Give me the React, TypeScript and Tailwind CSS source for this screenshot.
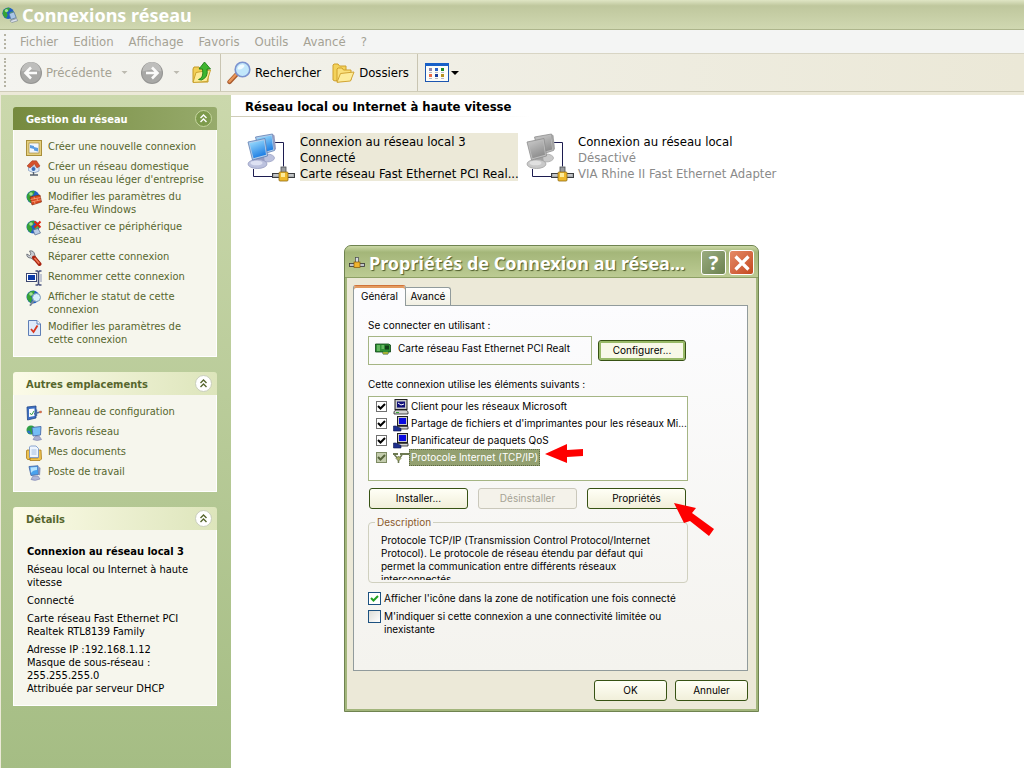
import type { ReactNode } from 'react';

interface TaskItem {
    label: string;
    icon: ReactNode;
}

interface PanelProps {
    title: string;
    primary?: boolean;
    children: ReactNode;
}

/* ---------- icons ---------- */

function GlobeShape() {
    return (
        <>
            <circle cx="7" cy="7" r="6.500" fill="#1f5fc4" />
            <path d="M1.500 4 Q5 0 9 1 L7.500 4.500 L5 6 L6.500 9 L4.500 13 Q0 9 1 6 Z" fill="#35a335" />
            <path d="M9.500 5.500 L12.500 5 Q13.500 8 11 11 L9 8.500 Z" fill="#56b948" />
            <circle cx="5" cy="4" r="1.800" fill="#c8f5b0" opacity="0.75" />
        </>
    );
}

function GlobeNetIcon({ className }: { className: string }) {
    return (
        <svg viewBox="0 0 18 18" className={className} aria-hidden="true">
            <GlobeShape />
            <path d="M8 7.500 L13.500 5.500 L16 12 L10 14 Z" fill="#a9c6e6" stroke="#4d6c98" strokeWidth="0.8" />
            <path d="M9 15.500 L16.500 13 L17.500 15.500 L11 17.500 Z" fill="#dfe5ee" stroke="#66738b" strokeWidth="0.6" />
        </svg>
    );
}

function ArrowCircle({ flip }: { flip?: boolean }) {
    return (
        <svg viewBox="0 0 24 24" className="h-6 w-6" aria-hidden="true">
            <circle cx="12" cy="12" r="11" fill="#959593" />
            <circle cx="12" cy="12" r="10" fill="#a8a8a6" />
            <path d="M2.500 10.500 A9.500 9.500 0 0 1 21.500 10.500 Q12 7 2.500 10.500 Z" fill="#bebebc" />
            <path
                d={flip ? 'M6 12 H17 M12 6.500 L17.500 12 L12 17.500' : 'M18 12 H7 M12 6.500 L6.500 12 L12 17.500'}
                fill="none"
                stroke="#fbfbfa"
                strokeWidth="2.600"
            />
        </svg>
    );
}

function Caret({ className }: { className: string }) {
    return (
        <svg viewBox="0 0 8 4" className={className} aria-hidden="true">
            <path d="M0 0 H8 L4 4 Z" fill="currentColor" />
        </svg>
    );
}

function FolderUpIcon() {
    return (
        <svg viewBox="0 0 20 23" className="h-[23px] w-5" aria-hidden="true">
            <path d="M1 8 L2 6 H7 L8.500 8 H16 V21 H1 Z" fill="#f2cf56" stroke="#c39a26" />
            <path d="M1 21.500 L4 11.500 L18.500 9 L15 20.500 Z" fill="#fdeb96" stroke="#cba32f" />
            <path d="M6.500 18.500 Q12 17 10.500 8 H7 L12.500 1 L18.500 8 H15 Q16.500 16.500 9.500 19 Z" fill="#3fb52f" stroke="#1d7f1a" strokeWidth="0.9" />
        </svg>
    );
}

function SearchIcon() {
    return (
        <svg viewBox="0 0 24 24" className="h-6 w-6" aria-hidden="true">
            <path d="M9.500 13.500 L2.500 21" stroke="#a85a2c" strokeWidth="4.400" strokeLinecap="round" />
            <path d="M9 13.500 L2.500 20.500" stroke="#e8965a" strokeWidth="2.400" strokeLinecap="round" />
            <circle cx="15.500" cy="8.500" r="7.300" fill="#c2e7fb" stroke="#7c93cf" strokeWidth="1.600" />
            <path d="M10.500 8 A5 5 0 0 1 16 3.500 Q19 4.500 16 7 T10.500 8 Z" fill="#f1fbff" />
        </svg>
    );
}

function FoldersIcon() {
    return (
        <svg viewBox="0 0 23 20" className="h-5 w-[23px]" aria-hidden="true">
            <path d="M1 17 V2 L2 1 H6 L7.500 3 H14 V15 L3 18 Z" fill="#f3d25c" stroke="#cfa02b" />
            <path d="M5 19 V6 L6 5 H10 L11.500 7 H19 V17 Z" fill="#fae07b" stroke="#cfa02b" />
            <path d="M5 19.300 L8.500 10.500 L22 9 L18.500 18 Z" fill="#fdec9b" stroke="#d2a535" />
        </svg>
    );
}

function ViewsIcon() {
    return (
        <svg viewBox="0 0 24 19" className="h-[19px] w-6" aria-hidden="true">
            <rect x="0.5" y="0.5" width="23" height="18" fill="#fdfdf8" stroke="#1c56b0" />
            <rect x="0" y="0" width="24" height="3" fill="#1860c8" />
            <path d="M4 5h3v3H4z" fill="#8f86ad" />
            <path d="M10 5h3v3h-3z" fill="#2d63c6" />
            <path d="M16 5h3v3h-3z" fill="#1e8a2a" />
            <path d="M4 11h3v3H4z" fill="#ec6a45" />
            <path d="M10 11h3v3h-3z" fill="#1c3f9c" />
            <path d="M16 11h3v3h-3z" fill="#b79320" />
            <path d="M4 9.500h3M10 9.500h3M16 9.500h3M4 15.500h3M10 15.500h3M16 15.500h3" stroke="#b9b9c4" />
        </svg>
    );
}

function ConnectionIcon({ disabled }: { disabled?: boolean }) {
    const id = disabled ? 'screen-off' : 'screen-on';
    const shine = disabled ? '#c9c9c9' : '#a6e4ff';
    const screen = disabled ? '#8f8f8f' : '#2080e4';
    const frame = disabled ? '#8e8e8e' : '#5e7fb4';
    const bezel = disabled ? '#bdbdbd' : '#b4cdea';
    const base = disabled ? '#c9c9c9' : '#bcc2de';
    const rim = disabled ? '#a2a2a2' : '#959cc0';
    return (
        <svg viewBox="0 0 48 50" className="h-[50px] w-12 shrink-0" aria-hidden="true">
            <defs>
                <linearGradient id={id} x1="0" y1="0" x2="0.4" y2="1">
                    <stop offset="0" stopColor={shine} />
                    <stop offset="1" stopColor={screen} />
                </linearGradient>
            </defs>
            <path d="M27 9.500h9.500v24M6.500 36v7.500H25" fill="none" stroke="#1c1c50" />
            <ellipse cx="20" cy="25" rx="7.500" ry="4" fill={base} stroke={rim} strokeWidth="0.7" />
            <path d="M8.500 4 L25.500 1 L27.500 17.500 L13 22 Z" fill={bezel} stroke={frame} strokeWidth="0.8" />
            <path d="M10 5.200 L24.500 2.500 L26.200 16.500 L14 20 Z" fill={`url(#${id})`} />
            <path d="M25.500 1 L27.500 2.500 L29 16 L27.500 17.500 Z" fill={rim} />
            <path d="M8.500 25 L17 23 L18 31 L9 32 Z" fill={rim} />
            <ellipse cx="10.500" cy="31" rx="9.500" ry="4.500" fill={base} stroke={rim} strokeWidth="0.8" />
            <ellipse cx="9.500" cy="30" rx="6" ry="2.300" fill={disabled ? '#e0e0e0' : '#dde1f2'} />
            <path d="M1 9 L18 5.500 L20.500 23 L5.500 27 Z" fill={bezel} stroke={frame} strokeWidth="0.8" />
            <path d="M2.500 10.200 L17 7.200 L19 21.800 L6.500 25.200 Z" fill={`url(#${id})`} />
            <rect x="34" y="34" width="5" height="8" fill="#9a9da0" stroke="#4d4f52" strokeWidth="0.8" />
            <rect x="25.500" y="40.500" width="22" height="4" fill="#a9acae" stroke="#3d3f42" />
            <path d="M27 42h19" stroke="#dcdfe1" />
            <rect x="32" y="39" width="9" height="9" rx="1" fill="#eeb92c" stroke="#8f6a12" strokeWidth="0.8" />
            <rect x="34" y="40" width="4" height="4" fill="#fdec9c" />
        </svg>
    );
}

function Frame16({ children }: { children: ReactNode }) {
    return <svg viewBox="0 0 16 16" className="h-4 w-4 shrink-0" aria-hidden="true">{children}</svg>;
}

const wizardIcon = (
    <Frame16>
        <rect x="0.5" y="0.5" width="15" height="15" fill="#e5cf7e" stroke="#a98f3a" />
        <rect x="3" y="3" width="10" height="10" fill="#f2f6fb" stroke="#8f7c36" strokeWidth="0.6" />
        <path d="M4 5 L8 6 L8 9 L4 8 Z M8 7 L12 8 L12 11.500 L8 10.500 Z" fill="#5a9be0" />
    </Frame16>
);

const homeNetIcon = (
    <Frame16>
        <path d="M2.500 6 H13 V11 L8 13 L2.500 10.500 Z" fill="#dce9f8" stroke="#7c95bd" strokeWidth="0.7" />
        <path d="M1 6 L6 0.800 H10.500 L14 6 L11 8 L8.500 4 L4 8 Z" fill="#d5512c" stroke="#96341a" strokeWidth="0.5" />
        <circle cx="7.500" cy="9" r="2" fill="#3c6cb4" />
        <path d="M7.500 12 V15 M4 15 H12" stroke="#55606e" strokeWidth="1.300" />
    </Frame16>
);

const firewallIcon = (
    <Frame16>
        <GlobeShape />
        <path d="M4 7 L14 5 L15.500 12 L6 15 Z" fill="#d9481e" stroke="#7d2209" strokeWidth="0.6" />
        <path d="M4.500 9.500 L14.500 7.500 M5.200 12 L15 9.800 M8 6.500 L8.500 9 M11 8.300 L11.500 10.500 M8.500 11.500 L9 14" stroke="#fbb08a" strokeWidth="0.7" />
    </Frame16>
);

const disableIcon = (
    <Frame16>
        <GlobeShape />
        <path d="M7 10 L12 8.500 L14.500 13 L9 15 Z" fill="#b9cce6" stroke="#54688c" strokeWidth="0.7" />
        <path d="M8.500 1.500 L14.500 7.500 M14.500 1.500 L8.500 7.500" stroke="#dc2a12" strokeWidth="2" />
    </Frame16>
);

const wrenchIcon = (
    <Frame16>
        <path d="M0.800 4 L3.500 5.500 L5 4 L3.500 1 Q8 0 8.800 5 L10 8 L7.500 10 L5 8 Q0.500 8 0.800 4 Z" fill="#c9ccd2" stroke="#5e636d" strokeWidth="0.8" />
        <path d="M8 7.500 L13.500 14" stroke="#a82411" strokeWidth="4" strokeLinecap="round" />
        <path d="M8.500 8 L13.300 13.500" stroke="#f07a55" strokeWidth="1.600" />
    </Frame16>
);

const renameIcon = (
    <Frame16>
        <rect x="0.5" y="3.500" width="10" height="8" fill="#fff" stroke="#3c4770" />
        <rect x="2" y="5" width="7" height="5" fill="#0a3aa8" />
        <path d="M9.500 1 H11.500 L12.500 2 L13.500 1 H15.500 M12.500 2 V14 M9.500 15 H11.500 L12.500 14 L13.500 15 H15.500" fill="none" stroke="#46507c" strokeWidth="1.600" />
        <path d="M15 4 V12" stroke="#8d95b5" />
    </Frame16>
);

const statusIcon = (
    <Frame16>
        <GlobeShape />
        <path d="M7.500 11 L4.500 15" stroke="#7a8698" strokeWidth="2" strokeLinecap="round" />
        <circle cx="10.500" cy="7.500" r="4" fill="#d6effc" stroke="#7f9bb8" />
    </Frame16>
);

const settingsIcon = (
    <Frame16>
        <path d="M2.500 0.500 H11 L14.500 4 V15.500 H2.500 Z" fill="#dfeafa" stroke="#5e7eb6" />
        <path d="M11 0.500 V4 H14.500" fill="#fff" stroke="#5e7eb6" />
        <path d="M5 9 L7.500 12 L11.500 5.500" fill="none" stroke="#d8371f" strokeWidth="1.800" />
    </Frame16>
);

const controlPanelIcon = (
    <Frame16>
        <path d="M1 2 L10 1 V13 L1.500 15 Z" fill="#3b6fc4" stroke="#234788" strokeWidth="0.8" />
        <path d="M3 4 L8.500 3.500 V11 L3 12 Z" fill="#fafcff" />
        <path d="M4 8 L5.500 10 L8 6" fill="none" stroke="#3aa048" />
        <path d="M8 9 L15.500 6.500 M10.500 4.500 V11" stroke="#4a6ea5" strokeWidth="1.400" />
        <circle cx="14.500" cy="7" r="1.300" fill="#d8714c" />
    </Frame16>
);

const netPlacesIcon = (
    <Frame16>
        <circle cx="5" cy="5" r="4.500" fill="#2f9f45" />
        <path d="M1 6 Q4 4 5 9 Q2 9 1 6 Z" fill="#2a6fd0" />
        <path d="M6 2.500 L15 1.500 L14.500 10 L7 11 Z" fill="#74bdf5" stroke="#4a6ba8" strokeWidth="0.9" />
        <path d="M9 11.500 H13.500 L15.500 14.500 Q11 16.500 7 14.500 Z" fill="#a9b0d4" stroke="#7880ac" strokeWidth="0.6" />
    </Frame16>
);

const documentsIcon = (
    <Frame16>
        <path d="M1 5 H4 V14.500 H1.500 L0.500 13 V6 Z M12 5 H15 L15.500 14 L14 15.500 H4 V13 H12 Z" fill="#eec24f" stroke="#a87c1c" strokeWidth="0.8" />
        <path d="M4.500 1 H10 L12.500 3.500 V12.500 H3.500 V2 Z" fill="#eef5fe" stroke="#6e8fc4" strokeWidth="0.8" />
        <path d="M5.500 5 H10.500 M5.500 7 H10.500 M5.500 9 H10.500" stroke="#8fb0dc" strokeWidth="0.8" />
    </Frame16>
);

const computerIcon = (
    <Frame16>
        <path d="M3 1.500 L12 0.800 L12.500 9.500 L5 10.500 Z" fill="#4aa2ee" stroke="#4a6ba8" strokeWidth="0.9" />
        <path d="M4.500 2.500 L11 2 L11 5 Q7 5 5 8 Z" fill="#b5e4ff" />
        <path d="M12.500 1.500 L14.500 3 L14 10.500 L12.500 9.500 Z" fill="#8b95bd" />
        <path d="M7 11 H12 L14 14 Q9 16.500 5 14.500 Z" fill="#b0b6d8" stroke="#7880ac" strokeWidth="0.6" />
    </Frame16>
);

const clientIcon = (
    <Frame16>
        <rect x="2" y="0.5" width="12" height="10" fill="#c8c8c8" stroke="#222" />
        <rect x="4" y="2.500" width="8" height="6" fill="#10107a" />
        <path d="M5 4 L8 6 L11 5" stroke="#fff" fill="none" />
        <path d="M1 12.500 L3 11 H13 L15 12.500 V15 H1 Z" fill="#d4d4d4" stroke="#222" strokeWidth="0.8" />
        <path d="M3 13.500 H6" stroke="#3a3" />
    </Frame16>
);

const serviceIcon = (
    <Frame16>
        <rect x="4.500" y="0.500" width="10" height="9" fill="#c8c8c8" stroke="#222" />
        <rect x="6" y="2" width="7" height="6" fill="#0a0ae0" />
        <path d="M4 10.500 H15 V13 H4 Z" fill="#d4d4d4" stroke="#222" strokeWidth="0.8" />
        <path d="M0.500 10 H3 L8 12.500 V15 H0.500 Z" fill="#1e2f8c" stroke="#0c1550" strokeWidth="0.6" />
    </Frame16>
);

const protocolIcon = (
    <Frame16>
        <path d="M0 4 H5 M7 4 H16" stroke="#6d7a52" strokeWidth="2" />
        <path d="M1.500 5 L5 8.500 M9 5 L6.500 8 M5.500 10 V13" fill="none" stroke="#6d7a52" strokeWidth="1.600" />
        <path d="M5.500 6 L8 8.500 L5.500 11 L3 8.500 Z" fill="#a6ae62" stroke="#5b6741" strokeWidth="0.6" />
    </Frame16>
);

const cardIcon = (
    <Frame16>
        <path d="M0.500 3 H13.500 L15.500 4 V11 H13 V13 H8 V11 H0.500 Z" fill="#2f8f35" stroke="#0d4414" strokeWidth="0.8" />
        <path d="M2 5 H5 M2 7 H5 M2 9 H5 M6.500 5 H9 M6.500 7 H9" stroke="#9be08d" />
        <rect x="10" y="4.500" width="4" height="4" fill="#123f18" />
        <path d="M8 12 H13" stroke="#d9c43a" strokeWidth="1.400" />
    </Frame16>
);

const lanIcon = (
    <Frame16>
        <rect x="6.500" y="3.500" width="3" height="6" fill="#d7dade" stroke="#44484c" strokeWidth="0.7" />
        <rect x="0.500" y="9.500" width="15" height="3" fill="#c0c4c8" stroke="#333" strokeWidth="0.8" />
        <rect x="5" y="8" width="6" height="5.500" fill="#f0b42e" stroke="#80560c" strokeWidth="0.7" />
    </Frame16>
);

/* ---------- data ---------- */

const menus = ['Fichier', 'Edition', 'Affichage', 'Favoris', 'Outils', 'Avancé', '?'];

const networkTasks: TaskItem[] = [
    { label: 'Créer une nouvelle connexion', icon: wizardIcon },
    { label: "Créer un réseau domestique\nou un réseau léger d'entreprise", icon: homeNetIcon },
    { label: 'Modifier les paramètres du\nPare-feu Windows', icon: firewallIcon },
    { label: 'Désactiver ce périphérique\nréseau', icon: disableIcon },
    { label: 'Réparer cette connexion', icon: wrenchIcon },
    { label: 'Renommer cette connexion', icon: renameIcon },
    { label: 'Afficher le statut de cette\nconnexion', icon: statusIcon },
    { label: 'Modifier les paramètres de\ncette connexion', icon: settingsIcon },
];

const otherPlaces: TaskItem[] = [
    { label: 'Panneau de configuration', icon: controlPanelIcon },
    { label: 'Favoris réseau', icon: netPlacesIcon },
    { label: 'Mes documents', icon: documentsIcon },
    { label: 'Poste de travail', icon: computerIcon },
];

const components = [
    { label: 'Client pour les réseaux Microsoft', icon: clientIcon },
    { label: "Partage de fichiers et d'imprimantes pour les réseaux Mi...", icon: serviceIcon },
    { label: 'Planificateur de paquets QoS', icon: serviceIcon },
    { label: 'Protocole Internet (TCP/IP)', icon: protocolIcon, selected: true },
];

/* ---------- explorer window ---------- */

function Grip() {
    return <span className="my-1 ml-1 w-0 self-stretch border-l-2 border-dotted border-[#b5b3a4]" />;
}

function Divider() {
    return <span className="w-px self-stretch bg-[#c9c5b2]" />;
}

function Toolbar() {
    return (
        <div className="flex h-[38px] items-center border-b border-[#cfccb8] bg-gradient-to-r from-[#f4f4f0] to-[#ebe8d7] text-[13px]">
            <Grip />
            <button disabled className="ml-[13px] flex items-center gap-[3px] text-[#a5a294]">
                <ArrowCircle />
                Précédente
                <Caret className="ml-1.5 h-[3px] w-[7px] text-[#bcbab0]" />
            </button>
            <button disabled aria-label="Suivante" className="ml-3 flex items-center gap-[9px]">
                <ArrowCircle flip />
                <Caret className="h-[3px] w-[7px] text-[#bcbab0]" />
            </button>
            <button aria-label="Dossier parent" className="ml-3"><FolderUpIcon /></button>
            <span className="w-2" />
            <Divider />
            <button className="ml-1.5 flex items-center gap-1"><SearchIcon />Rechercher</button>
            <button className="ml-[11px] flex items-center gap-1"><FoldersIcon />Dossiers</button>
            <span className="w-2" />
            <Divider />
            <button aria-label="Affichages" className="ml-[7px] flex items-center gap-0.5">
                <ViewsIcon />
                <Caret className="h-1 w-2 text-black" />
            </button>
        </div>
    );
}

function Panel({ title, primary, children }: PanelProps) {
    return (
        <section>
            <header
                className={`flex h-[23px] items-center justify-between rounded-t-[3px] pl-[13px] pr-[5px] text-[11px] font-bold ${primary
                    ? 'bg-gradient-to-r from-[#768a3e] to-[#97ab6c] text-white'
                    : 'bg-gradient-to-r from-[#fcfbe8] to-[#dde5bb] text-[#56662d]'
                    }`}
            >
                <h2 className="pt-1">{title}</h2>
                <button
                    aria-label={`Réduire ${title}`}
                    className={`flex h-[17px] w-[17px] items-center justify-center rounded-full border ${primary
                        ? 'border-[#c7d6a0] bg-[#7d9a4c] text-white'
                        : 'border-[#c9cebb] bg-white text-[#56662d]'
                        }`}
                >
                    <svg viewBox="0 0 9 9" className="h-[9px] w-[9px]" aria-hidden="true">
                        <path d="M1.500 4 L4.500 1 L7.500 4 M1.500 8 L4.500 5 L7.500 8" fill="none" stroke="currentColor" strokeWidth="1.400" />
                    </svg>
                </button>
            </header>
            <div className="border border-t-0 border-white bg-[#f6f6ed] px-3 py-2.5 text-[11px] leading-[13px]">{children}</div>
        </section>
    );
}

function TaskList({ items }: { items: TaskItem[] }) {
    return (
        <ul className="flex flex-col gap-1 text-[#56662d]">
            {items.map(item => (
                <li key={item.label}>
                    <a href="#" className="flex min-h-4 gap-1.5 whitespace-pre">
                        {item.icon}
                        {item.label}
                    </a>
                </li>
            ))}
        </ul>
    );
}

function Sidebar() {
    return (
        <aside className="ml-px w-[230px] shrink-0 bg-gradient-to-b from-[#cbd8ac] to-[#a5bd84] px-3 pr-3.5 pt-3">
            <div className="flex flex-col gap-[15px]">
                <Panel title="Gestion du réseau" primary>
                    <TaskList items={networkTasks} />
                </Panel>
                <Panel title="Autres emplacements">
                    <TaskList items={otherPlaces} />
                </Panel>
                <Panel title="Détails">
                    <div className="flex flex-col gap-[5px] pl-px pt-[5px]">
                        <p className="font-bold">Connexion au réseau local 3</p>
                        <p>Réseau local ou Internet à haute<br />vitesse</p>
                        <p>Connecté</p>
                        <p>Carte réseau Fast Ethernet PCI<br />Realtek RTL8139 Family</p>
                        <p>
                            Adresse IP :192.168.1.12<br />
                            Masque de sous-réseau :<br />
                            255.255.255.0<br />
                            Attribuée par serveur DHCP
                        </p>
                    </div>
                </Panel>
            </div>
        </aside>
    );
}

function ConnectionList() {
    return (
        <main className="min-w-0 flex-1 bg-white">
            <h2 className="h-[21px] pl-3.5 pt-1 text-[13px] font-bold leading-4">Réseau local ou Internet à haute vitesse</h2>
            <div className="h-px w-[300px] bg-gradient-to-r from-[#cfccb8] to-white" />
            <ul className="flex flex-wrap gap-2 pl-4 pt-4 text-[13px] leading-4">
                <li className="flex w-[271px] gap-[5px]">
                    <ConnectionIcon />
                    <div className="h-12 w-[218px] whitespace-nowrap bg-[#ece9d8] pt-px">
                        <p>Connexion au réseau local 3</p>
                        <p>Connecté</p>
                        <p>Carte réseau Fast Ethernet PCI Real...</p>
                    </div>
                </li>
                <li className="flex w-[271px] gap-1">
                    <ConnectionIcon disabled />
                    <div className="whitespace-nowrap pt-px text-[#8a8a8a]">
                        <p className="text-black">Connexion au réseau local</p>
                        <p>Désactivé</p>
                        <p>VIA Rhine II Fast Ethernet Adapter</p>
                    </div>
                </li>
            </ul>
        </main>
    );
}

/* ---------- properties dialog ---------- */

interface DialogButtonProps {
    className: string;
    disabled?: boolean;
    focused?: boolean;
    children: ReactNode;
}

function DialogButton({ className, disabled, focused, children }: DialogButtonProps) {
    const look = disabled
        ? 'border-[#cac8bb] bg-[#f4f2ea] text-[#a5a294]'
        : focused
            ? 'border-[#375214] bg-[#f8f8e8] shadow-[inset_0_0_0_2px_#98b968]'
            : 'border-[#375214] bg-gradient-to-b from-[#fffff6] to-[#f1efda]';
    return (
        <button disabled={disabled} className={`h-[21px] rounded-[3px] border text-center ${look} ${className}`}>
            {children}
        </button>
    );
}

interface CheckProps {
    checked?: boolean;
    boxClass: string;
    markClass: string;
}

function Check({ checked, boxClass, markClass }: CheckProps) {
    return (
        <span className="grid shrink-0 place-items-center">
            <input type="checkbox" defaultChecked={checked} className={`peer col-start-1 row-start-1 block appearance-none border ${boxClass}`} />
            <svg viewBox="0 0 9 9" className={`pointer-events-none col-start-1 row-start-1 hidden h-[9px] w-[9px] peer-checked:block ${markClass}`} aria-hidden="true">
                <path d="M1 4 L3.500 6.500 L8 2" fill="none" stroke="currentColor" strokeWidth="2" />
            </svg>
        </span>
    );
}

function PropertiesDialog() {
    return (
        <div
            role="dialog"
            aria-labelledby="dialog-title"
            className="absolute left-[344px] top-[245px] w-[415px] overflow-hidden rounded-t-[7px] border border-[#6f8350] bg-[#a3b67c] font-['Inter','Liberation_Sans',Arial,sans-serif] text-[10px] leading-[13px]"
        >
            <header className="flex h-8 items-center border-b border-[#8da065] bg-gradient-to-b from-[#cbd8a6] via-[#a4b679] via-20% to-[#bccb93] pl-1 pr-1">
                {lanIcon}
                <h1
                    id="dialog-title"
                    className="min-w-0 flex-1 whitespace-nowrap pl-1 pt-0.5 font-['Noto_Sans',sans-serif] text-lg font-bold leading-6 text-white [text-shadow:1px_1px_1px_#4e5c2c]"
                >
                    Propriétés de Connexion au résea...
                </h1>
                <div className="flex gap-[3px] pt-0.5">
                    <button aria-label="Aide" className="grid h-[25px] w-[25px] place-items-center rounded-[3px] border border-white bg-gradient-to-br from-[#9aac80] to-[#6c8250] font-['Noto_Sans',sans-serif] text-xl font-bold leading-5 text-white">
                        ?
                    </button>
                    <button aria-label="Fermer" className="grid h-[25px] w-[25px] place-items-center rounded-[3px] border border-white bg-gradient-to-br from-[#e58a66] to-[#c4481d]">
                        <svg viewBox="0 0 16 16" className="h-4 w-4" aria-hidden="true">
                            <path d="M1.500 1.500 L14.500 14.500 M14.500 1.500 L1.500 14.500" stroke="#fff" strokeWidth="3.200" />
                        </svg>
                    </button>
                </div>
            </header>

            <div className="mx-0.5 mb-0.5 bg-[#ece9d8] pb-2 pl-1.5 pr-2 pt-[7px]">
                <div role="tablist" className="flex items-end">
                    <button role="tab" aria-selected="true" className="z-10 -mb-px h-[21px] w-[53px] rounded-t-[3px] border border-b-0 border-[#919b9c] border-t-[#d0743a] bg-[#fcfcfe] shadow-[inset_0_2px_0_#e39a5f]">
                        Général
                    </button>
                    <button role="tab" aria-selected="false" className="h-[18px] w-[45px] rounded-tr-[3px] border border-b-0 border-l-0 border-[#919b9c] bg-gradient-to-b from-white to-[#f2f0e3]">
                        Avancé
                    </button>
                </div>

                <div role="tabpanel" className="h-[366px] border border-[#919b9c] bg-gradient-to-b from-[#fcfcfe] to-[#f4f3ee] pl-3.5 pt-3">
                    <label htmlFor="adapter" className="block h-[18px] leading-[14px]">Se connecter en utilisant :</label>
                    <div className="flex items-center gap-1.5">
                        <div className="flex h-[29px] w-56 items-center gap-[7px] border border-[#a5b584] pb-1 pl-1.5">
                            {cardIcon}
                            <input id="adapter" readOnly defaultValue="Carte réseau Fast Ethernet PCI Realt" className="min-w-0 flex-1 bg-transparent outline-none" />
                        </div>
                        <DialogButton focused className="w-[88px]">Configurer...</DialogButton>
                    </div>

                    <p className="mb-[5px] mt-3 leading-[14px]">Cette connexion utilise les éléments suivants :</p>
                    <ul className="h-[85px] w-80 border border-[#a5b584] bg-white pt-px">
                        {components.map(item => (
                            <li key={item.label}>
                                <label className="flex h-[17px] items-center whitespace-nowrap pl-[7px]">
                                    <Check
                                        checked
                                        boxClass={item.selected ? 'h-[11px] w-[11px] border-[#7d8a63] bg-[#c3ccad]' : 'h-[11px] w-[11px] border-[#707070] bg-white'}
                                        markClass={item.selected ? 'text-[#56633a]' : 'text-black'}
                                    />
                                    <span className="ml-1.5">{item.icon}</span>
                                    <span className={`border px-px leading-[15px] ${item.selected ? 'border-dotted border-[#5d6842] bg-[#93a070] text-white' : 'border-transparent'}`}>
                                        {item.label}
                                    </span>
                                </label>
                            </li>
                        ))}
                    </ul>

                    <div className="mt-[7px] flex gap-2.5 pl-px">
                        <DialogButton className="w-[99px]">Installer...</DialogButton>
                        <DialogButton disabled className="w-[99px]">Désinstaller</DialogButton>
                        <DialogButton className="w-[99px]">Propriétés</DialogButton>
                    </div>

                    <fieldset className="mt-[7px] w-80 rounded border border-[#d0d0bf] pb-0.5 pl-3">
                        <legend className="-ml-1.5 px-0.5 text-[#8a5a2c]">Description</legend>
                        <p className="h-[51px] overflow-hidden pt-[5px]">
                            Protocole TCP/IP (Transmission Control Protocol/Internet<br />
                            Protocol). Le protocole de réseau étendu par défaut qui<br />
                            permet la communication entre différents réseaux<br />
                            interconnectés.
                        </p>
                    </fieldset>

                    <div className="mt-[9px] flex flex-col gap-[5px]">
                        <label className="flex items-start gap-[3px]">
                            <Check checked boxClass="h-[13px] w-[13px] border-[#1c5180] bg-white" markClass="text-[#21a121]" />
                            Afficher l'icône dans la zone de notification une fois connecté
                        </label>
                        <label className="flex items-start gap-[3px]">
                            <Check boxClass="h-[13px] w-[13px] border-[#1c5180] bg-gradient-to-br from-[#dcdcd7] to-white" markClass="text-[#21a121]" />
                            <span>M'indiquer si cette connexion a une connectivité limitée ou<br />inexistante</span>
                        </label>
                    </div>
                </div>

                <div className="mt-[9px] flex justify-end gap-2">
                    <DialogButton className="w-[73px]">OK</DialogButton>
                    <DialogButton className="w-[73px]">Annuler</DialogButton>
                </div>
            </div>
        </div>
    );
}

function HintArrows() {
    return (
        <svg viewBox="0 0 180 100" className="pointer-events-none absolute left-[540px] top-[440px] h-[100px] w-[180px]" aria-hidden="true">
            <path d="M5 14 L27 4 V10 L43 9 V16 L27 17 V23 Z" fill="#fe0000" />
            <path d="M134 63 L156 68 L152 73 L174 89 L169 96 L150 81 L144 83 Z" fill="#fe0000" />
        </svg>
    );
}

export default function App() {
    return (
        <div className="relative flex min-h-screen flex-col bg-[#ece9d8] font-['DejaVu_Sans_Condensed','DejaVu_Sans',Tahoma,sans-serif] text-black">
            <header className="flex h-[30px] items-center gap-1 border-b border-[#adb58c] bg-gradient-to-b from-[#dfe5c4] via-[#bfc79d] via-20% to-[#d0d8b1] pl-0.5">
                <GlobeNetIcon className="h-4 w-4" />
                <h1 className="font-['Noto_Sans',sans-serif] text-lg font-bold leading-6 text-white">Connexions réseau</h1>
            </header>

            <nav className="flex h-6 items-center border-b border-[#d8d5c4] bg-[#f4f5f4] text-[13px] text-[#a5a294]">
                <Grip />
                <div className="ml-3.5 flex gap-[15px]">
                    {menus.map(menu => (
                        <button key={menu}>{menu}</button>
                    ))}
                </div>
            </nav>

            <Toolbar />

            <div className="mt-[3px] flex flex-1">
                <Sidebar />
                <ConnectionList />
            </div>

            <PropertiesDialog />
            <HintArrows />
        </div>
    );
}
